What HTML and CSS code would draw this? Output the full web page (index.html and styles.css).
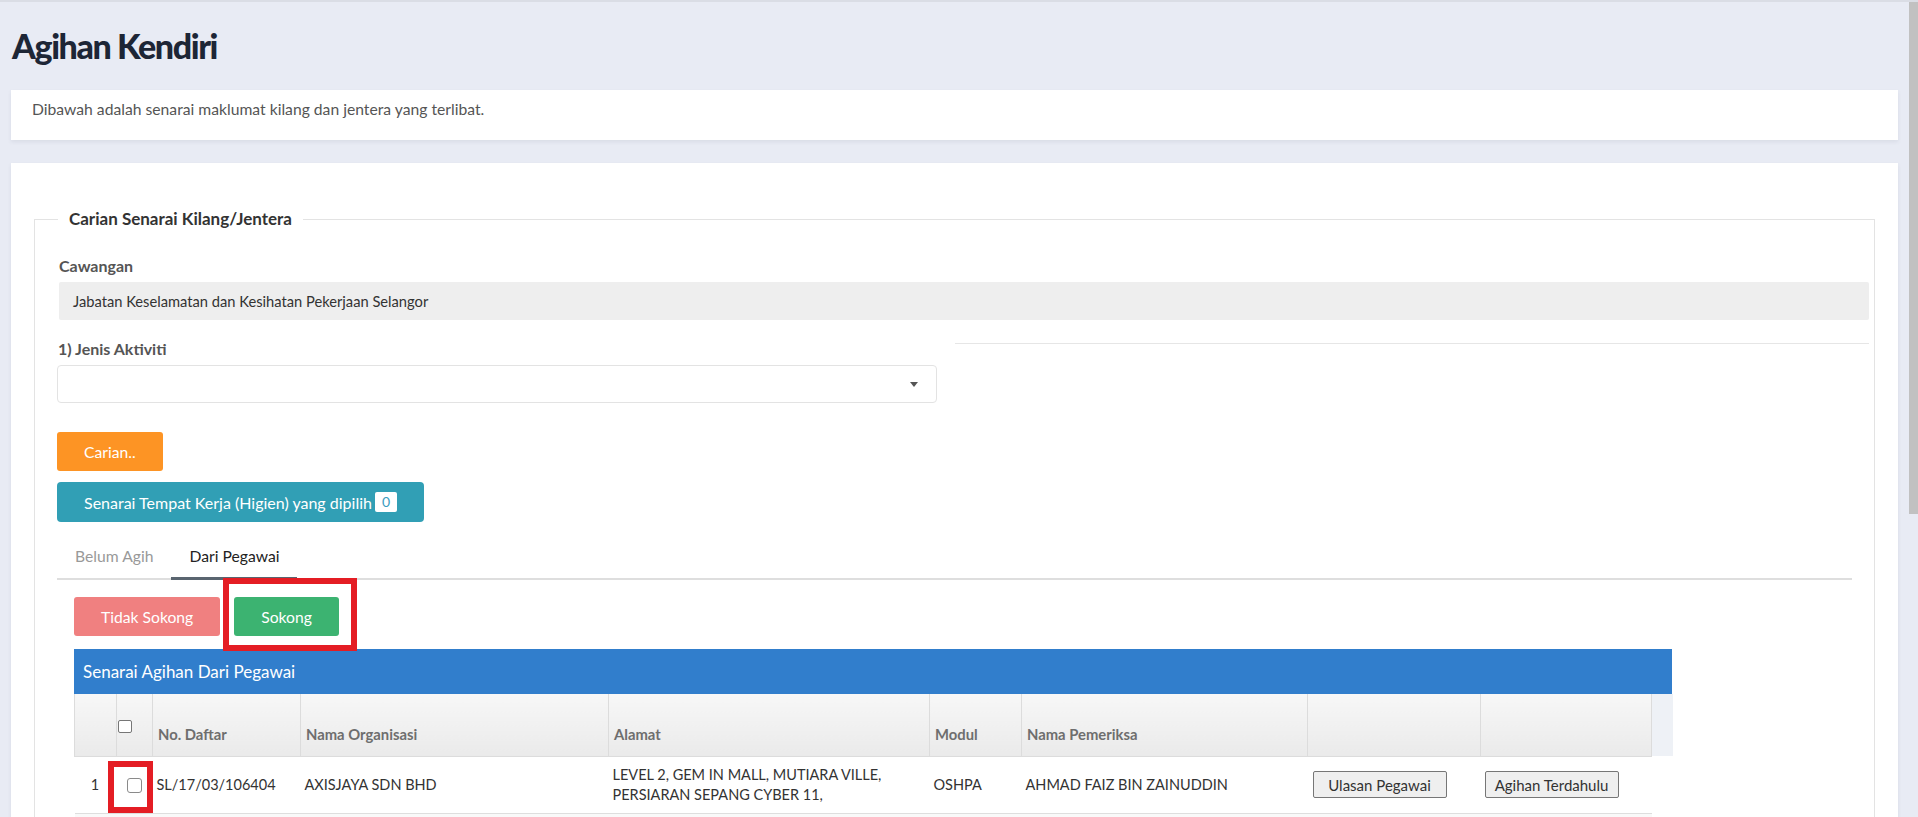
FILE: index.html
```html
<!DOCTYPE html>
<html lang="ms">
<head>
<meta charset="utf-8">
<title>Agihan Kendiri</title>
<link rel="stylesheet" href="styles.css">
</head>
<body>
<div class="topline"></div>
<main class="page">
  <h1 class="title">Agihan Kendiri</h1>
  <section class="card intro">
    <p>Dibawah adalah senarai maklumat kilang dan jentera yang terlibat.</p>
  </section>
  <section class="card main">
    <fieldset class="search">
      <legend>Carian Senarai Kilang/Jentera</legend>
      <div class="lbl">Cawangan</div>
      <div class="readonly">Jabatan Keselamatan dan Kesihatan Pekerjaan Selangor</div>
      <div class="row2">
        <div class="col1">
          <div class="lbl">1) Jenis Aktiviti</div>
          <div class="select"><span class="caret"></span></div>
        </div>
        <div class="col2"></div>
      </div>
      <div class="btnrow"><button class="btn btn-orange">Carian..</button></div>
      <div class="btnrow tight"><button class="btn btn-teal">Senarai Tempat Kerja (Higien) yang dipilih <span class="badge">0</span></button></div>
      <nav class="tabs">
        <span class="tab">Belum Agih</span>
        <span class="tab active">Dari Pegawai</span>
      </nav>
      <div class="tabpane">
        <div class="actions">
          <button class="btn btn-red">Tidak Sokong</button>
          <button class="btn btn-green">Sokong</button>
          <span class="mark mark-sokong"></span>
        </div>
        <div class="panel">
          <div class="panel-head">Senarai Agihan Dari Pegawai</div>
          <table class="grid">
            <colgroup>
              <col class="c-no"><col class="c-chk"><col class="c-daftar"><col class="c-org"><col class="c-alamat"><col class="c-modul"><col class="c-nama"><col class="c-b1"><col class="c-b2"><col class="c-gut">
            </colgroup>
            <thead>
              <tr>
                <th></th>
                <th class="th-chk"><span class="cbox"></span></th>
                <th>No. Daftar</th>
                <th>Nama Organisasi</th>
                <th>Alamat</th>
                <th>Modul</th>
                <th>Nama Pemeriksa</th>
                <th></th>
                <th></th>
                <th class="gutter"></th>
              </tr>
            </thead>
            <tbody>
              <tr>
                <td class="num">1</td>
                <td class="chk"><span class="cbox cbox-row"></span></td>
                <td>SL/17/03/106404</td>
                <td>AXISJAYA SDN BHD</td>
                <td>LEVEL 2, GEM IN MALL, MUTIARA VILLE, PERSIARAN SEPANG CYBER 11,</td>
                <td>OSHPA</td>
                <td>AHMAD FAIZ BIN ZAINUDDIN</td>
                <td class="act1"><button class="rbtn">Ulasan Pegawai</button></td>
                <td class="act2"><button class="rbtn">Agihan Terdahulu</button></td>
                <td class="gutter"></td>
              </tr>
              <tr class="odd">
                <td></td><td></td><td></td><td></td><td></td><td></td><td></td><td></td><td></td>
                <td class="gutter"></td>
              </tr>
            </tbody>
          </table>
          <span class="mark mark-chk"></span>
        </div>
      </div>
    </fieldset>
  </section>
</main>
<div class="scrollbar"></div>
</body>
</html>
```

FILE: styles.css
```css
html { scrollbar-width: none; }
html::-webkit-scrollbar { display: none; }
* { box-sizing: border-box; }
body {
  margin: 0;
  background: #e8ebf4;
  font-family: Lato, "Open Sans", "Liberation Sans", sans-serif;
  color: #333;
  overflow: hidden;
  height: 817px;
}
.topline { height: 2px; background: #dadde5; }
.page { padding: 0 20px 0 11px; }
.title {
  margin: 24px 0 24px 1px;
  font-size: 34px;
  line-height: 40px;
  font-weight: 900;
  letter-spacing: -1.4px;
  color: #1d2636;
}
.card { background: #fff; box-shadow: 0 2px 4px rgba(40, 50, 80, 0.08); }
.intro p {
  margin: 0;
  padding: 9px 21px 21px;
  font-size: 15.7px;
  line-height: 20px;
  color: #555;
}
.main { margin-top: 23px; padding: 46px 0 40px; }
.search {
  margin: 0 23px;
  padding: 27px 5px 0 22px;
  border: 1px solid #e3e3e3;
  min-width: 0;
}
.search legend {
  margin-left: 1px;
  padding: 0 11px;
  font-size: 17px;
  line-height: 20px;
  font-weight: 700;
  color: #333;
}
.lbl {
  font-size: 16px;
  line-height: 20px;
  font-weight: 700;
  color: #555;
  margin: 0 0 6px 2px;
}
.readonly {
  margin-left: 2px;
  height: 38px;
  background: #eee;
  border-radius: 2px;
  padding-left: 14px;
  display: flex;
  align-items: center;
  font-size: 14.7px;
  color: #333;
}
.row2 { margin-top: 19px; display: flex; gap: 18px; }
.col1 { width: 880px; }
.col1 .lbl { margin-left: 1px; }
.col2 { flex: 1; margin-top: 4px; height: 0; border-top: 1px solid #e6e6e6; }
.select {
  height: 38px;
  border: 1px solid #e3e3e3;
  border-radius: 4px;
  background: #fff;
  display: flex;
  justify-content: flex-end;
  align-items: center;
  padding-right: 18px;
}
.caret {
  width: 0; height: 0;
  border-left: 4.5px solid transparent;
  border-right: 4.5px solid transparent;
  border-top: 5px solid #555;
}
.btnrow { margin-top: 29px; display: flex; }
.btnrow.tight { margin-top: 11px; }
.btn {
  font-family: inherit;
  font-size: 15.7px;
  border: none;
  border-radius: 3px;
  color: #fff;
  padding: 0 27px;
  height: 39px;
  display: inline-flex;
  align-items: center;
}
.btn-orange { background: #fd9424; }
.btn-teal { background: #319fb5; height: 40px; border-radius: 4px; font-size: 16px; }
.badge {
  margin-left: 3px;
  background: #fff;
  color: #3a9dc0;
  font-size: 14px;
  line-height: 20px;
  height: 20px;
  padding: 0 7px;
  border-radius: 2px;
}
.tabs {
  margin: 14px 17px 0 0;
  display: flex;
  border-bottom: 2px solid #dedede;
}
.tab {
  padding: 10px 18px 11px;
  font-size: 15.7px;
  line-height: 20px;
  color: #999;
  border-bottom: 3px solid transparent;
  margin-bottom: -2px;
}
.tab.active { color: #222; border-bottom-color: #5a6570; }
.tabpane { padding: 17px 0 0 17px; }
.actions { position: relative; display: flex; gap: 14px; }
.btn-red { background: #f08080; }
.btn-green { background: #3cb371; }
.mark {
  position: absolute;
  border: 6px solid #e41d24;
  z-index: 5;
}
.mark-sokong { left: 149px; top: -19px; width: 134px; height: 73px; }
.panel { position: relative; margin-top: 13px; width: 1598px; }
.panel-head {
  height: 45px;
  background: #317ecc;
  color: #fff;
  font-size: 17px;
  padding-left: 9px;
  display: flex;
  align-items: center;
}
.mark-chk { left: 34px; top: 112px; width: 45px; height: 52px; }
.grid {
  width: 1598px;
  table-layout: fixed;
  border-collapse: collapse;
  font-size: 14.5px;
}
.c-no { width: 42px; }
.c-chk { width: 36px; }
.c-daftar { width: 148px; }
.c-org { width: 308px; }
.c-alamat { width: 321px; }
.c-modul { width: 92px; }
.c-nama { width: 286px; }
.c-b1 { width: 173px; }
.c-b2 { width: 171px; }
.c-gut { width: 21px; }
.grid th {
  height: 62px;
  background: linear-gradient(#f7f7f7, #eaeaea);
  border-left: 1px solid #dcdcdc;
  border-bottom: 1px solid #dcdcdc;
  text-align: left;
  vertical-align: bottom;
  padding: 0 4px 12px 5px;
  line-height: 20px;
  font-size: 14.8px;
  font-weight: 700;
  color: #6e6e6e;
}
.grid th.th-chk { vertical-align: middle; padding: 0 0 0 1px; }
.grid th.gutter { background: #eef1f6; border-bottom: none; }
.grid td {
  padding: 8px 4px;
  line-height: 20px;
  vertical-align: middle;
  color: #333;
  border-bottom: 1px solid #dedede;
  background: #fff;
}
.grid td.num { text-align: center; padding: 0 1px 0 0; }
.grid td.chk { text-align: center; padding: 0; }
.grid td.act1 { padding-left: 5px; }
.grid td.act2 { padding-left: 4px; }
.grid td.gutter { border-bottom: none; background: transparent; }
.grid tr.odd td { background: #f9f9f9; height: 56px; }
.grid tr.odd td.gutter { background: #fff; }
.cbox {
  display: inline-block;
  width: 14px;
  height: 13px;
  border: 1px solid #767676;
  border-radius: 2px;
  background: #fff;
  vertical-align: middle;
}
.cbox-row { width: 15px; height: 15px; border-color: #8a8a8a; border-radius: 3px; }
.rbtn {
  font-family: inherit;
  font-size: 15px;
  color: #333;
  background: #efefef;
  border: 1px solid #767676;
  border-radius: 2px;
  height: 27px;
  width: 134px;
  padding: 0;
  text-align: center;
}
.scrollbar {
  position: fixed;
  right: 0;
  top: 2px;
  width: 9px;
  height: 512px;
  background: #c1c1c1;
}
```
